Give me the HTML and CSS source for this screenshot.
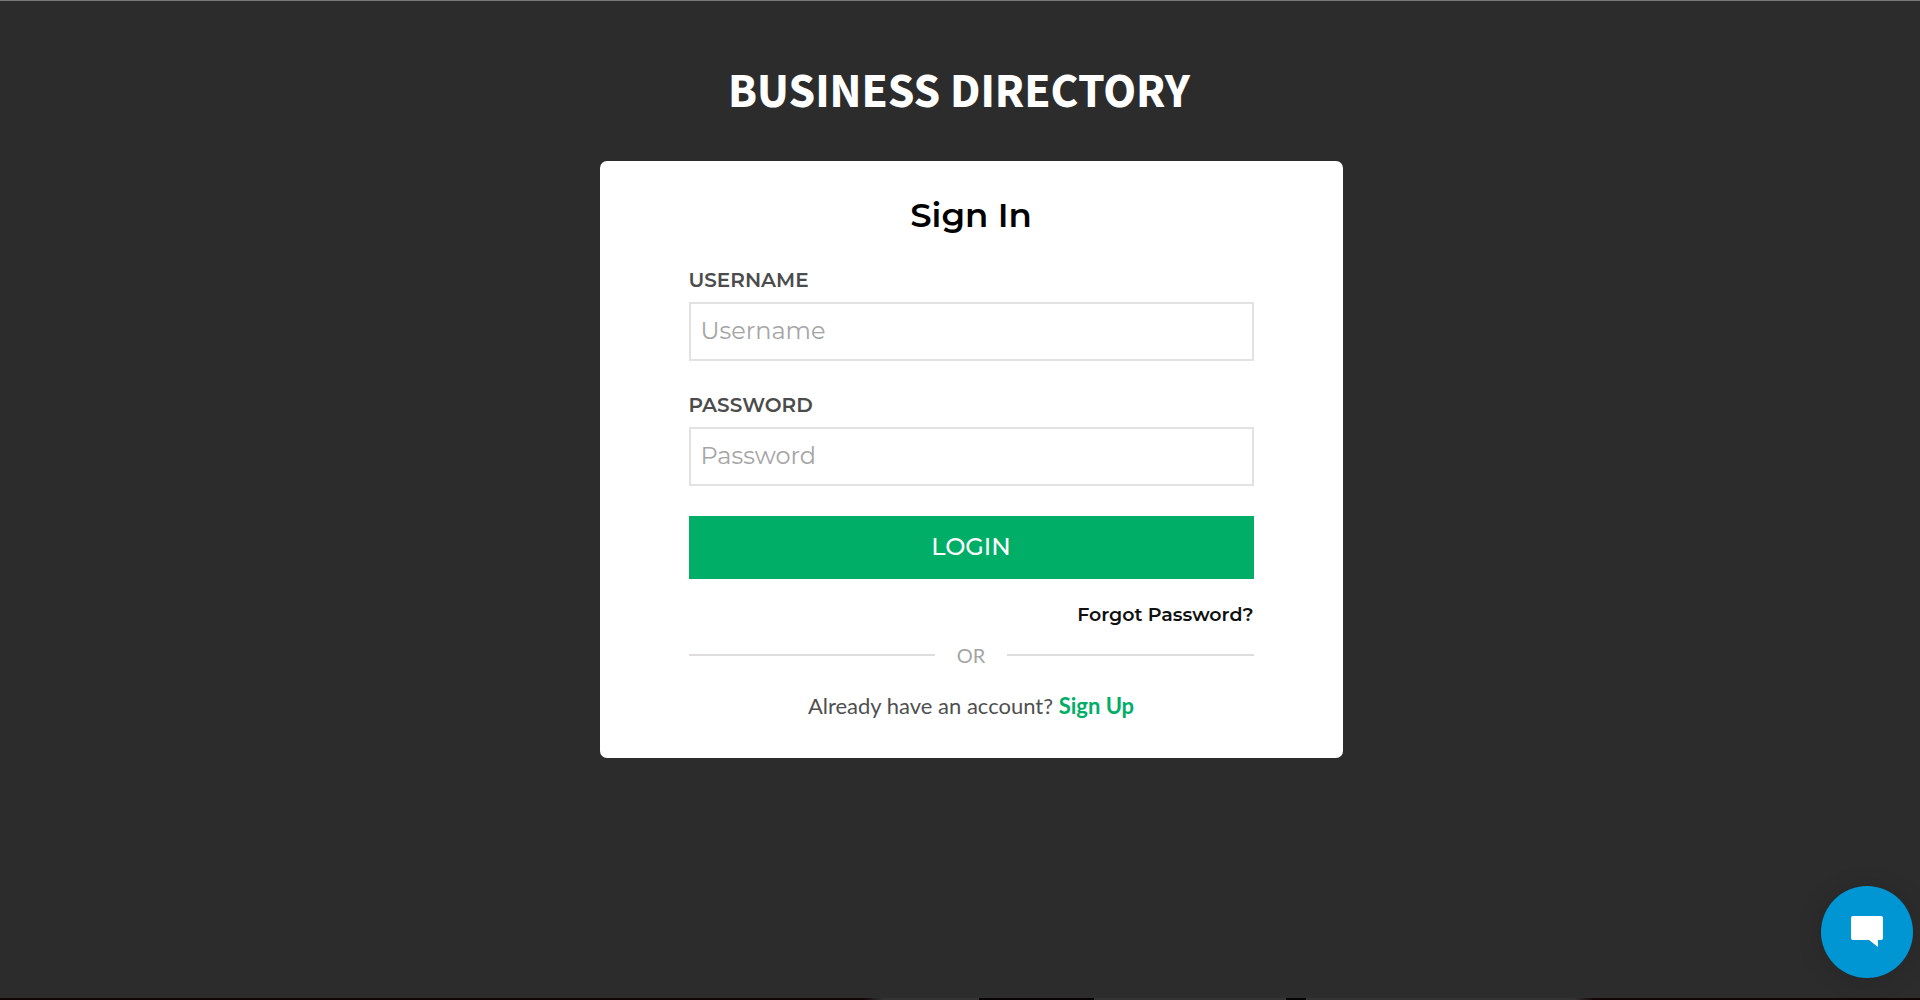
FILE: index.html
```html
<!DOCTYPE html>
<html lang="en">
<head>
<meta charset="utf-8">
<meta name="viewport" content="width=device-width, initial-scale=1">
<title>Business Directory</title>
<link rel="stylesheet" href="styles.css">
</head>
<body>
<main class="page">
  <h1 class="brand">BUSINESS DIRECTORY</h1>
  <section class="card">
    <h2 class="card-title">Sign In</h2>
    <form class="form">
      <div class="field">
        <label class="label" for="username">USERNAME</label>
        <input class="input" id="username" type="text" placeholder="Username">
      </div>
      <div class="field">
        <label class="label" for="password">PASSWORD</label>
        <input class="input" id="password" type="password" placeholder="Password">
      </div>
      <button class="login" type="submit">LOGIN</button>
    </form>
    <a class="forgot" href="#">Forgot Password?</a>
    <div class="divider">OR</div>
    <p class="signup">Already have an account? <a class="signup-link" href="#">Sign Up</a></p>
  </section>
</main>
<button class="chat" type="button" aria-label="Open chat">
  <svg width="32" height="32" viewBox="0 0 32 32" aria-hidden="true"><path fill="#fff" d="M2 0H30Q32 0 32 2V22Q32 24 30 24H27V31L18 24H2Q0 24 0 22V2Q0 0 2 0Z"/></svg>
</button>
</body>
</html>
```
FILE: styles.css
```css
* {
  box-sizing: border-box;
}

body {
  margin: 0;
  background: #2c2c2c;
  font-family: Montserrat, Inter, sans-serif;
}

.page {
  display: flex;
  flex-direction: column;
  align-items: center;
  min-height: 100vh;
  padding: 57px 18px 48px 16px;
  border-top: 1px solid #777;
  background: linear-gradient(
    90deg,
    #120508 45%, #333 46% 51%,
    #050303 51% 57%, #333 57% 67%,
    #050303 67% 68%, #333 68% 82%,
    #120508 83%
  ) bottom / 100% 2px no-repeat;
}

.brand {
  margin: 0;
  color: #fff;
  font: 700 48px/68px "Source Sans Pro", "Source Sans 3", "Noto Sans CJK SC", sans-serif;
}

.card {
  display: flex;
  flex-direction: column;
  width: 100%;
  max-width: 743px;
  margin: 35px 0 0 24px;
  padding: 32px 89px 37px;
  border-radius: 7px;
  background: #fff;
}

.card-title {
  margin: 0 0 29px;
  color: #000;
  font-size: 34px;
  font-weight: 600;
  line-height: 44px;
  text-align: center;
}

.form {
  display: flex;
  flex-direction: column;
}

.field {
  display: flex;
  flex-direction: column;
  margin-bottom: 30px;
}

.label {
  margin-bottom: 8px;
  color: #4c4c4c;
  font-size: 20px;
  font-weight: 600;
  line-height: 28px;
}

.input {
  width: 100%;
  height: 59px;
  padding: 0 10px 2px;
  border: 2px solid #e2e2e2;
  border-radius: 0;
  background: #fff;
  color: #4c4c4c;
  font: 400 24px/30px Montserrat, Inter, sans-serif;
}

.input::placeholder {
  color: #a5a5a5;
  opacity: 1;
}

.login {
  height: 63px;
  padding: 0 0 2px;
  border: 0;
  background: #00ae67;
  color: #fff;
  font: 500 24px/30px Montserrat, Inter, sans-serif;
}

.forgot {
  align-self: flex-end;
  margin-top: 22px;
  color: #111;
  font-size: 19px;
  font-weight: 600;
  line-height: 28px;
  text-decoration: none;
}

.divider {
  display: flex;
  align-items: center;
  gap: 22px;
  margin-top: 12px;
  color: #a5a5a5;
  font: 400 20px/28px Lato, sans-serif;
}

.divider::before,
.divider::after {
  content: "";
  flex: 1;
  height: 2px;
  background: #dedcdc;
}

.signup {
  margin: 22px 0 0;
  color: #4f4f4f;
  font: 400 22px/30px Lato, sans-serif;
  text-align: center;
}

.signup-link {
  color: #00ae67;
  font-weight: 700;
  text-decoration: none;
}

.chat {
  position: fixed;
  right: 7px;
  bottom: 22px;
  display: flex;
  align-items: center;
  justify-content: center;
  width: 92px;
  height: 92px;
  padding: 0;
  border: 0;
  border-radius: 50%;
  background: #0095d3;
  box-shadow: 0 2px 24px rgba(0, 0, 0, 0.15);
}
```
